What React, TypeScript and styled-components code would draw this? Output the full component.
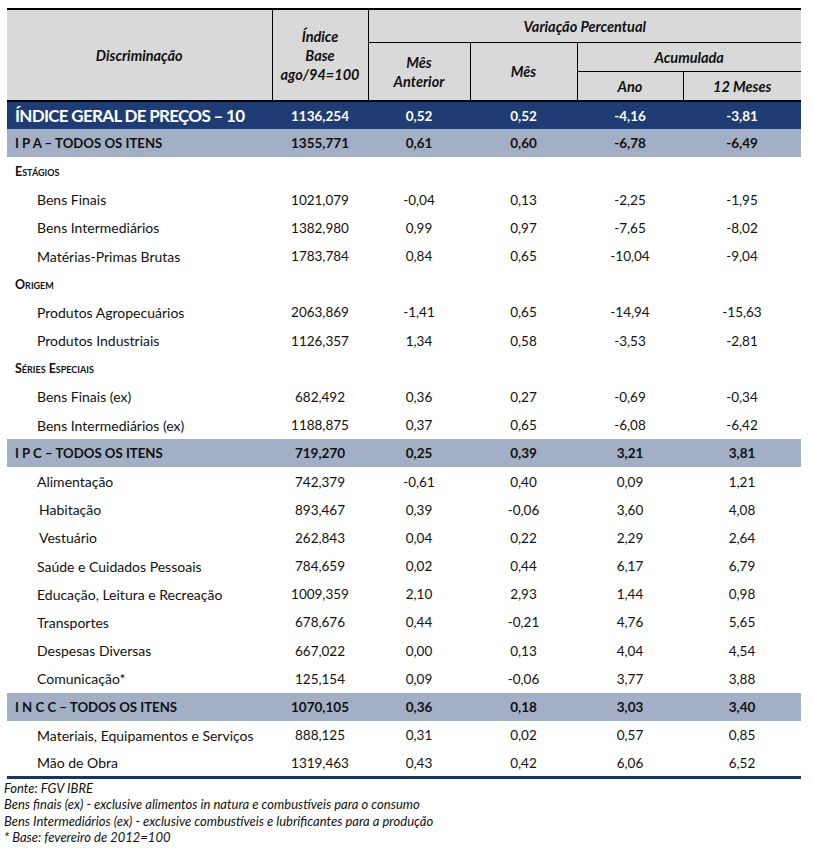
import React from 'react';
import styled, { createGlobalStyle } from 'styled-components';

const GlobalStyle = createGlobalStyle`
    body {
        margin: 0;
        background: #fff;
        font-family: Lato, "Open Sans", sans-serif;
        color: #111;
    }
`;

const Page = styled.div`
    padding: 8px 12px 0 4px;
    width: 813px;
    box-sizing: border-box;
`;

const Table = styled.table`
    margin-left: 3px;
    width: 794px;
    border-collapse: collapse;
    table-layout: fixed;
    border-top: 2px solid #000;
    border-bottom: 3px solid #16365c;
`;

const HeadCell = styled.th<{ $h: number; $left?: boolean; $bottom?: boolean }>`
    background: #d9d9d9;
    height: ${(p) => p.$h}px;
    padding: 0;
    font-size: 14.5px;
    font-weight: 700;
    font-style: italic;
    line-height: 19px;
    text-align: center;
    vertical-align: middle;
    border-left: ${(p) => (p.$left ? '1px solid #000' : 'none')};
    border-bottom: ${(p) => (p.$bottom ? '1px solid #000' : 'none')};
`;

const HeadBase = styled.tr`
    border-bottom: 2px solid #000;
`;

type Kind = 'igp' | 'group' | 'section' | 'item';

const Row = styled.tr<{ $kind: Kind }>`
    height: 28.2px;
    background: ${(p) =>
        p.$kind === 'igp' ? '#1f3d74' : p.$kind === 'group' ? '#a2afc5' : '#fff'};
    color: ${(p) => (p.$kind === 'igp' ? '#fff' : '#111')};
    font-weight: ${(p) => (p.$kind === 'igp' || p.$kind === 'group' ? 700 : 400)};
`;

const labelSize: Record<Kind, string> = {
    igp: 'font-size: 17px; letter-spacing: -0.7px;',
    group: 'font-size: 13.2px;',
    section: 'font-size: 12.5px; font-variant: small-caps;',
    item: 'font-size: 14px;',
};

const Label = styled.td<{ $kind: Kind; $indent?: number }>`
    padding: 0 0 0 ${(p) => (p.$kind === 'item' ? 30 + (p.$indent || 0) : 8)}px;
    ${(p) => labelSize[p.$kind]}
    font-weight: ${(p) => (p.$kind === 'item' ? 400 : 700)};
    white-space: nowrap;
    vertical-align: middle;
`;

const Value = styled.td`
    padding: 0;
    font-size: 13.5px;
    text-align: center;
    vertical-align: middle;
`;

const Notes = styled.div`
    padding-top: 1px;
    font-size: 13px;
    font-style: italic;
    line-height: 16.3px;
    color: #111;
`;

type Line = { kind: Kind; label: string; values?: string[]; indent?: number };

const rows: Line[] = [
    { kind: 'igp', label: 'ÍNDICE GERAL DE PREÇOS – 10', values: ['1136,254', '0,52', '0,52', '-4,16', '-3,81'] },
    { kind: 'group', label: 'I P A – TODOS OS ITENS', values: ['1355,771', '0,61', '0,60', '-6,78', '-6,49'] },
    { kind: 'section', label: 'Estágios' },
    { kind: 'item', label: 'Bens Finais', values: ['1021,079', '-0,04', '0,13', '-2,25', '-1,95'] },
    { kind: 'item', label: 'Bens Intermediários', values: ['1382,980', '0,99', '0,97', '-7,65', '-8,02'] },
    { kind: 'item', label: 'Matérias-Primas Brutas', values: ['1783,784', '0,84', '0,65', '-10,04', '-9,04'] },
    { kind: 'section', label: 'Origem' },
    { kind: 'item', label: 'Produtos Agropecuários', values: ['2063,869', '-1,41', '0,65', '-14,94', '-15,63'] },
    { kind: 'item', label: 'Produtos Industriais', values: ['1126,357', '1,34', '0,58', '-3,53', '-2,81'] },
    { kind: 'section', label: 'Séries Especiais' },
    { kind: 'item', label: 'Bens Finais (ex)', values: ['682,492', '0,36', '0,27', '-0,69', '-0,34'] },
    { kind: 'item', label: 'Bens Intermediários (ex)', values: ['1188,875', '0,37', '0,65', '-6,08', '-6,42'] },
    { kind: 'group', label: 'I P C – TODOS OS ITENS', values: ['719,270', '0,25', '0,39', '3,21', '3,81'] },
    { kind: 'item', label: 'Alimentação', values: ['742,379', '-0,61', '0,40', '0,09', '1,21'] },
    { kind: 'item', label: 'Habitação', indent: 2, values: ['893,467', '0,39', '-0,06', '3,60', '4,08'] },
    { kind: 'item', label: 'Vestuário', indent: 2, values: ['262,843', '0,04', '0,22', '2,29', '2,64'] },
    { kind: 'item', label: 'Saúde e Cuidados Pessoais', values: ['784,659', '0,02', '0,44', '6,17', '6,79'] },
    { kind: 'item', label: 'Educação, Leitura e Recreação', values: ['1009,359', '2,10', '2,93', '1,44', '0,98'] },
    { kind: 'item', label: 'Transportes', values: ['678,676', '0,44', '-0,21', '4,76', '5,65'] },
    { kind: 'item', label: 'Despesas Diversas', values: ['667,022', '0,00', '0,13', '4,04', '4,54'] },
    { kind: 'item', label: 'Comunicação*', values: ['125,154', '0,09', '-0,06', '3,77', '3,88'] },
    { kind: 'group', label: 'I N C C – TODOS OS ITENS', values: ['1070,105', '0,36', '0,18', '3,03', '3,40'] },
    { kind: 'item', label: 'Materiais, Equipamentos e Serviços', values: ['888,125', '0,31', '0,02', '0,57', '0,85'] },
    { kind: 'item', label: 'Mão de Obra', values: ['1319,463', '0,43', '0,42', '6,06', '6,52'] },
];

const App: React.FC = () => (
    <Page>
        <GlobalStyle />
        <Table>
            <colgroup>
                <col style={{ width: 265 }} />
                <col style={{ width: 96 }} />
                <col style={{ width: 102 }} />
                <col style={{ width: 107 }} />
                <col style={{ width: 106 }} />
                <col style={{ width: 118 }} />
            </colgroup>
            <thead>
                <tr>
                    <HeadCell $h={32} rowSpan={3}>Discriminação</HeadCell>
                    <HeadCell $h={32} rowSpan={3} $left>
                        Índice<br />Base<br />ago/94=100
                    </HeadCell>
                    <HeadCell $h={32} colSpan={4} $left $bottom>Variação Percentual</HeadCell>
                </tr>
                <tr>
                    <HeadCell $h={28} rowSpan={2} $left>Mês<br />Anterior</HeadCell>
                    <HeadCell $h={28} rowSpan={2} $left>Mês</HeadCell>
                    <HeadCell $h={28} colSpan={2} $left $bottom>Acumulada</HeadCell>
                </tr>
                <HeadBase>
                    <HeadCell $h={28} $left>Ano</HeadCell>
                    <HeadCell $h={28} $left>12 Meses</HeadCell>
                </HeadBase>
            </thead>
            <tbody>
                {rows.map((r) => (
                    <Row key={r.label} $kind={r.kind}>
                        <Label $kind={r.kind} $indent={r.indent}>{r.label}</Label>
                        {(r.values || ['', '', '', '', '']).map((v, i) => (
                            <Value key={i}>{v}</Value>
                        ))}
                    </Row>
                ))}
            </tbody>
        </Table>
        <Notes>
            Fonte: FGV IBRE<br />
            Bens finais (ex) - exclusive alimentos in natura e combustíveis para o consumo<br />
            Bens Intermediários (ex) - exclusive combustíveis e lubrificantes para a produção<br />
            * Base: fevereiro de 2012=100
        </Notes>
    </Page>
);

export default App;
